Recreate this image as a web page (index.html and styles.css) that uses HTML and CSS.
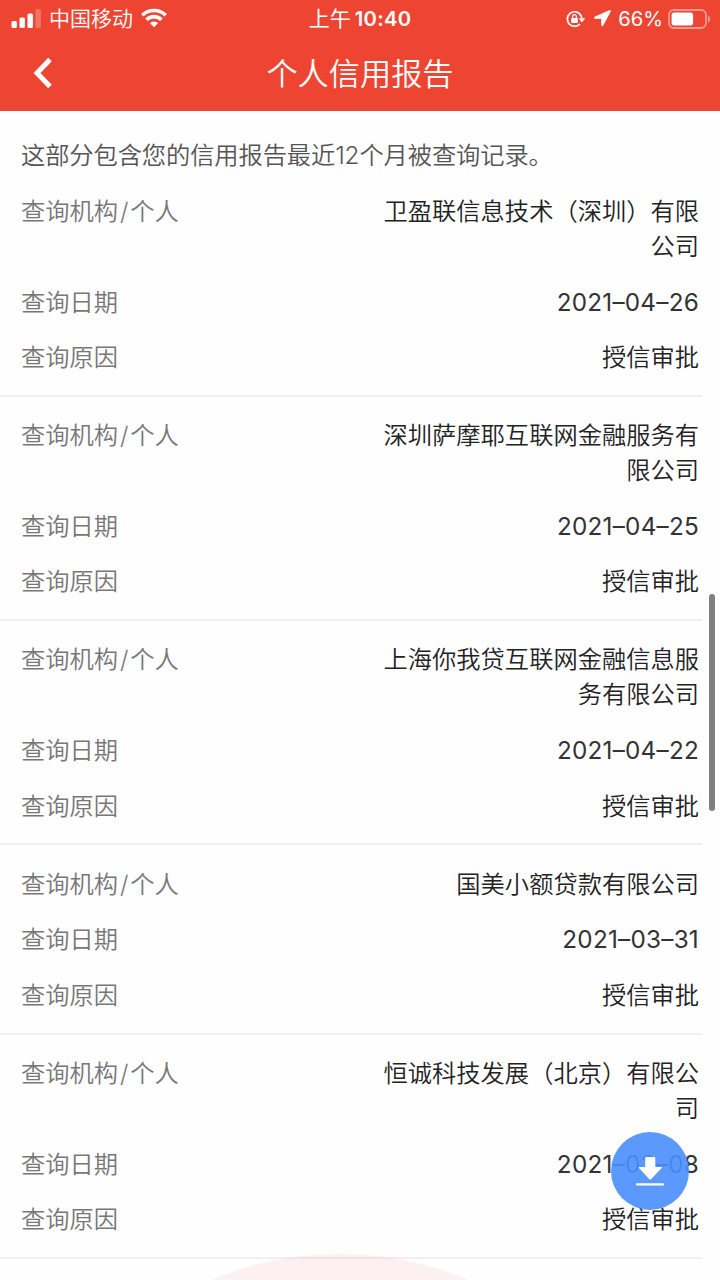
FILE: index.html
```html
<!DOCTYPE html>
<html lang="zh-CN">
<head>
<meta charset="utf-8">
<title>个人信用报告</title>
<link rel="stylesheet" href="styles.css">
</head>
<body>
<div class="screen">
  <header class="header">
    <div class="status">
      <div class="status-left">
        <svg class="signal" width="31" height="20" viewBox="0 0 31 20" fill="#fff"><rect x="0.5" y="13" width="5.400" height="7" rx="1.5"/><rect x="8.5" y="9.5" width="5.400" height="10.5" rx="1.5"/><rect x="16.5" y="5.5" width="5.400" height="14.5" rx="1.5"/><rect x="24.5" y="1" width="5.400" height="19" rx="1.5" opacity=".25"/></svg>
        <span class="carrier">中国移动</span>
        <svg class="wifi" width="26" height="20" viewBox="0 0 26 20"><g fill="none" stroke="#fff" stroke-width="3.6"><path d="M1.3 7.2a17 17 0 0 1 23.4 0"/><path d="M5.5 11.7a10.8 10.8 0 0 1 15 0"/></g><path d="M8.9 15.1a6 6 0 0 1 8.2 0L13 19.3Z" fill="#fff"/></svg>
      </div>
      <div class="clock">上午<b>10:40</b></div>
      <div class="status-right">
        <svg class="lock" width="20" height="18" viewBox="0 0 20 18"><path d="M14 14A7.300 7.300 0 1 1 14.800 5.200" fill="none" stroke="#fff" stroke-width="1.7"/><path d="M12.6 8.200h6.600l-3.300 4.400Z" fill="#fff"/><path d="M14.300 4.500a7.300 7.300 0 0 1 1.600 4" fill="none" stroke="#fff" stroke-width="1.700"/><rect x="5.2" y="8" width="6.6" height="5" rx=".8" fill="#fff"/><path d="M6.6 8V6.600a1.9 1.9 0 0 1 3.8 0V8" fill="none" stroke="#fff" stroke-width="1.2"/></svg>
        <svg class="locate" width="17" height="17" viewBox="0 0 17 17"><path d="M15.4.5.9 7.1c-.8.4-.6 1.3.2 1.3l6.5.1.1 6.6c0 .9 1 1 1.3.2L16.4 1.4C16.7.6 16.1.2 15.4.5Z" fill="#fff" stroke="#fff" stroke-width=".8"/></svg>
        <span class="percent">66%</span>
        <svg class="battery" width="43" height="20" viewBox="0 0 43 20"><rect x="1" y="1" width="37" height="18" rx="5" fill="none" stroke="#fff" stroke-width="1.8" opacity=".45"/><rect x="3.6" y="3.6" width="21.5" height="12.8" rx="2.6" fill="#fff"/><path d="M40 6.5c3 1 3 6 0 7Z" fill="#fff" opacity=".45"/></svg>
      </div>
    </div>
    <div class="navbar">
      <svg class="back" width="20" height="34" viewBox="0 0 20 34"><path d="M17 2.500 4 16l13 13.500" fill="none" stroke="#fff" stroke-width="5"/></svg>
      <h1 class="title">个人信用报告</h1>
    </div>
  </header>
  <main class="content">
    <p class="intro">这部分包含您的信用报告最近12个月被查询记录。</p>
    <section class="record">
      <div class="row"><span class="label">查询机构<span class="slash">/</span>个人</span><span class="value">卫盈联信息技术（深圳）有限<br>公司</span></div>
      <div class="row"><span class="label">查询日期</span><span class="value date">2021–04–26</span></div>
      <div class="row"><span class="label">查询原因</span><span class="value">授信审批</span></div>
    </section>
    <section class="record">
      <div class="row"><span class="label">查询机构<span class="slash">/</span>个人</span><span class="value">深圳萨摩耶互联网金融服务有<br>限公司</span></div>
      <div class="row"><span class="label">查询日期</span><span class="value date">2021–04–25</span></div>
      <div class="row"><span class="label">查询原因</span><span class="value">授信审批</span></div>
    </section>
    <section class="record">
      <div class="row"><span class="label">查询机构<span class="slash">/</span>个人</span><span class="value">上海你我贷互联网金融信息服<br>务有限公司</span></div>
      <div class="row"><span class="label">查询日期</span><span class="value date">2021–04–22</span></div>
      <div class="row"><span class="label">查询原因</span><span class="value">授信审批</span></div>
    </section>
    <section class="record">
      <div class="row"><span class="label">查询机构<span class="slash">/</span>个人</span><span class="value">国美小额贷款有限公司</span></div>
      <div class="row"><span class="label">查询日期</span><span class="value date">2021–03–31</span></div>
      <div class="row"><span class="label">查询原因</span><span class="value">授信审批</span></div>
    </section>
    <section class="record">
      <div class="row"><span class="label">查询机构<span class="slash">/</span>个人</span><span class="value">恒诚科技发展（北京）有限公<br>司</span></div>
      <div class="row"><span class="label">查询日期</span><span class="value date">2021–03–08</span></div>
      <div class="row"><span class="label">查询原因</span><span class="value">授信审批</span></div>
    </section>
  </main>
  <div class="glow"></div>
  <div class="scrollbar"></div>
  <div class="download">
    <svg width="30" height="30" viewBox="0 0 30 30" fill="#fff"><path d="M11 1h8.500q.8 0 .8.800V11h6q1.300 0 .4 1L16 23.300q-.8.800-1.600 0L4 12q-.9-1 .4-1H10.200V1.800q0-.8.800-.8Z"/><rect x="1" y="27.200" width="28" height="2.400" rx="1"/></svg>
  </div>
</div>
</body>
</html>
```
FILE: styles.css
```css
* { box-sizing: border-box; }
body {
  margin: 0;
  background: #fefefe;
  font-family: Inter, "Noto Sans CJK SC", sans-serif;
  font-weight: 350;
}
.screen {
  position: relative;
  width: 720px;
  height: 1280px;
  overflow: hidden;
}
.header {
  height: 111px;
  background: #ee4533;
  color: #fff;
}
.status {
  display: grid;
  grid-template-columns: 1fr auto 1fr;
  align-items: center;
  height: 37px;
  padding: 0 9px 0 11px;
  font-size: 21px;
  line-height: 37px;
}
.status-left, .status-right { display: flex; align-items: center; }
.status-right { justify-content: flex-end; }
.signal { margin-right: 7px; margin-bottom: 1px; }
.carrier { margin-right: 8px; }
.wifi { margin-bottom: 2px; }
.clock { position: relative; left: -1px; font-weight: 400; }
.clock b { margin-left: 4px; font-size: 20.200px; font-weight: 600; letter-spacing: 0.3px; }
.lock { margin-right: 8px; }
.locate { margin-right: 7px; }
.percent { margin-right: 5px; font-size: 20.200px; font-weight: 400; }
.navbar {
  display: grid;
  grid-template-columns: 60px 1fr 60px;
  align-items: center;
  height: 74px;
}
.back { margin-left: 33px; }
.title {
  margin: 0;
  font-size: 31.2px;
  font-weight: 350;
  line-height: 74px;
  text-align: center;
}
.content {
  font-size: 24.270px;
  font-weight: 350;
  line-height: 34.600px;
}
.intro {
  margin: 0;
  padding: 27.200px 21px 0;
  color: #555;
  letter-spacing: -0.1px;
}
.record {
  display: flex;
  flex-direction: column;
  gap: 21.200px;
  width: 702px;
  padding: 21.400px 3px 20px 21px;
  border-bottom: 2px solid #f0f0f0;
}
.row { display: flex; justify-content: space-between; }
.label { color: #777; }
.slash { padding: 0 1.900px; }
.value { color: #222; text-align: right; }
.date { color: #333; font-weight: 400; letter-spacing: 0.250px; }
.glow {
  position: absolute;
  left: 9px;
  top: 1253.500px;
  width: 662px;
  height: 662px;
  border-radius: 50%;
  background: rgba(236, 130, 140, 0.110);
}
.scrollbar {
  position: absolute;
  left: 709px;
  top: 594px;
  width: 6px;
  height: 217px;
  border-radius: 3px;
  background: #808080;
}
.download {
  position: absolute;
  left: 610.500px;
  top: 1132px;
  display: flex;
  align-items: center;
  justify-content: center;
  width: 78px;
  height: 78px;
  border-radius: 50%;
  background: rgba(75, 143, 255, 0.910);
}
.download svg { margin-left: 1px; }
```
